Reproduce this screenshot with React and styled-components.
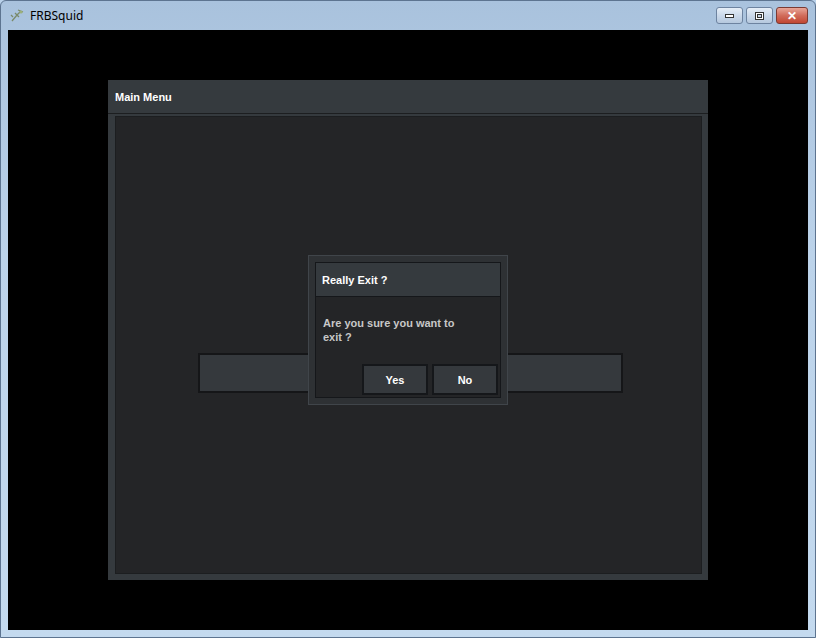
import styled, { createGlobalStyle } from "styled-components";

const Global = createGlobalStyle`
  html, body { margin: 0; padding: 0; background: #b9d1ea; }
  body { font-family: "Liberation Sans", Arial, sans-serif; }
`;

const Window = styled.div`
  width: 816px;
  height: 638px;
  box-sizing: border-box;
  display: flex;
  flex-direction: column;
  background: linear-gradient(180deg, #a9c2dd 0%, #bcd3ea 40%, #c4daef 100%);
  border: 1px solid #5d7490;
  border-radius: 6px 6px 0 0;
`;

const TitleBar = styled.div`
  height: 29px;
  display: flex;
  align-items: center;
  padding: 0 7px 0 8px;
  font-size: 12px;
  font-family: "Noto Sans", "Liberation Sans", sans-serif;
  color: #000;
`;

const TitleText = styled.span`
  margin-left: 5px;
  flex: 1;
`;

const Controls = styled.div`
  display: flex;
  gap: 3px;
`;

const CtrlBtn = styled.div`
  width: ${(p) => (p.close ? 32 : 27)}px;
  height: 17px;
  box-sizing: border-box;
  border: 1px solid ${(p) => (p.close ? "#7a3a33" : "#6d83a0")};
  border-radius: 3px;
  background: ${(p) =>
    p.close
      ? "linear-gradient(180deg,#e8a597 0%,#d16c5b 50%,#c14632 100%)"
      : "linear-gradient(180deg,#e6eef7 0%,#cbd9ea 50%,#b5c8de 100%)"};
  display: flex;
  align-items: center;
  justify-content: center;
  color: #fff;
  font-weight: bold;
  font-size: 12px;
`;

const Client = styled.div`
  flex: 1;
  margin: 0 7px 7px 7px;
  background: #000;
  display: flex;
  justify-content: center;
  padding-top: 50px;
`;

const Panel = styled.div`
  width: 600px;
  height: 500px;
  display: flex;
  flex-direction: column;
  background: #353a3e;
  position: relative;
`;

const PanelHeader = styled.div`
  height: 33px;
  border-bottom: 1px solid #1c1e20;
  display: flex;
  align-items: center;
  padding-left: 7px;
  color: #fff;
  font-weight: bold;
  font-size: 11px;
`;

const PanelBody = styled.div`
  flex: 1;
  margin: 2px 6px 6px 7px;
  background: #242527;
  border: 1px solid #1c1e20;
  display: flex;
  align-items: center;
  justify-content: center;
`;

const BackBar = styled.div`
  width: 421px;
  height: 36px;
  margin-left: 4px;
  margin-top: 56px;
  background: #35393d;
  border: 2px solid #151618;
`;

const Dialog = styled.div`
  position: absolute;
  left: 200px;
  top: 175px;
  width: 200px;
  height: 150px;
  box-sizing: border-box;
  background: #2e3134;
  border: 1px solid #40454a;
  padding: 6px;
`;

const DialogInner = styled.div`
  height: 100%;
  box-sizing: border-box;
  background: #242527;
  border: 1px solid #15171a;
  display: flex;
  flex-direction: column;
`;

const DialogTitle = styled.div`
  height: 33px;
  background: #353a3e;
  border-bottom: 1px solid #15171a;
  display: flex;
  align-items: center;
  padding-left: 6px;
  color: #fff;
  font-weight: bold;
  font-size: 11px;
`;

const Message = styled.div`
  padding: 19px 30px 0 7px;
  color: #c8c8c8;
  font-weight: bold;
  font-size: 11px;
  line-height: 14px;
  flex: 1;
`;

const Buttons = styled.div`
  display: flex;
  justify-content: flex-end;
  gap: 4px;
  padding: 0 2px 2px 0;
`;

const Button = styled.div`
  width: 66px;
  height: 31px;
  box-sizing: border-box;
  background: #35393d;
  border: 2px solid #15171a;
  display: flex;
  align-items: center;
  justify-content: center;
  color: #fff;
  font-weight: bold;
  font-size: 11px;
`;

export default function App() {
  return (
    <>
      <Global />
      <Window>
        <TitleBar>
          <svg width="16" height="16" viewBox="0 0 16 16">
            <path d="M3 13 L8 7 L12 3 M6 5 L10 9 M9 2 L14 4 M4 9 L2 7" stroke="#7a8a6a" strokeWidth="1.3" fill="none" />
            <circle cx="12" cy="4" r="1.5" fill="#9bb07a" />
          </svg>
          <TitleText>FRBSquid</TitleText>
          <Controls>
            <CtrlBtn>
              <svg width="9" height="4"><rect x="0.5" y="0.5" width="8" height="3" fill="#fff" stroke="#333" /></svg>
            </CtrlBtn>
            <CtrlBtn>
              <svg width="9" height="8"><rect x="0.5" y="0.5" width="8" height="7" fill="#fff" stroke="#333" /><rect x="2.5" y="2.5" width="4" height="3" fill="#cbd9ea" stroke="#333" /></svg>
            </CtrlBtn>
            <CtrlBtn close>✕</CtrlBtn>
          </Controls>
        </TitleBar>
        <Client>
          <Panel>
            <PanelHeader>Main Menu</PanelHeader>
            <PanelBody>
              <BackBar />
            </PanelBody>
            <Dialog>
              <DialogInner>
                <DialogTitle>Really Exit ?</DialogTitle>
                <Message>Are you sure you want to exit ?</Message>
                <Buttons>
                  <Button>Yes</Button>
                  <Button>No</Button>
                </Buttons>
              </DialogInner>
            </Dialog>
          </Panel>
        </Client>
      </Window>
    </>
  );
}
